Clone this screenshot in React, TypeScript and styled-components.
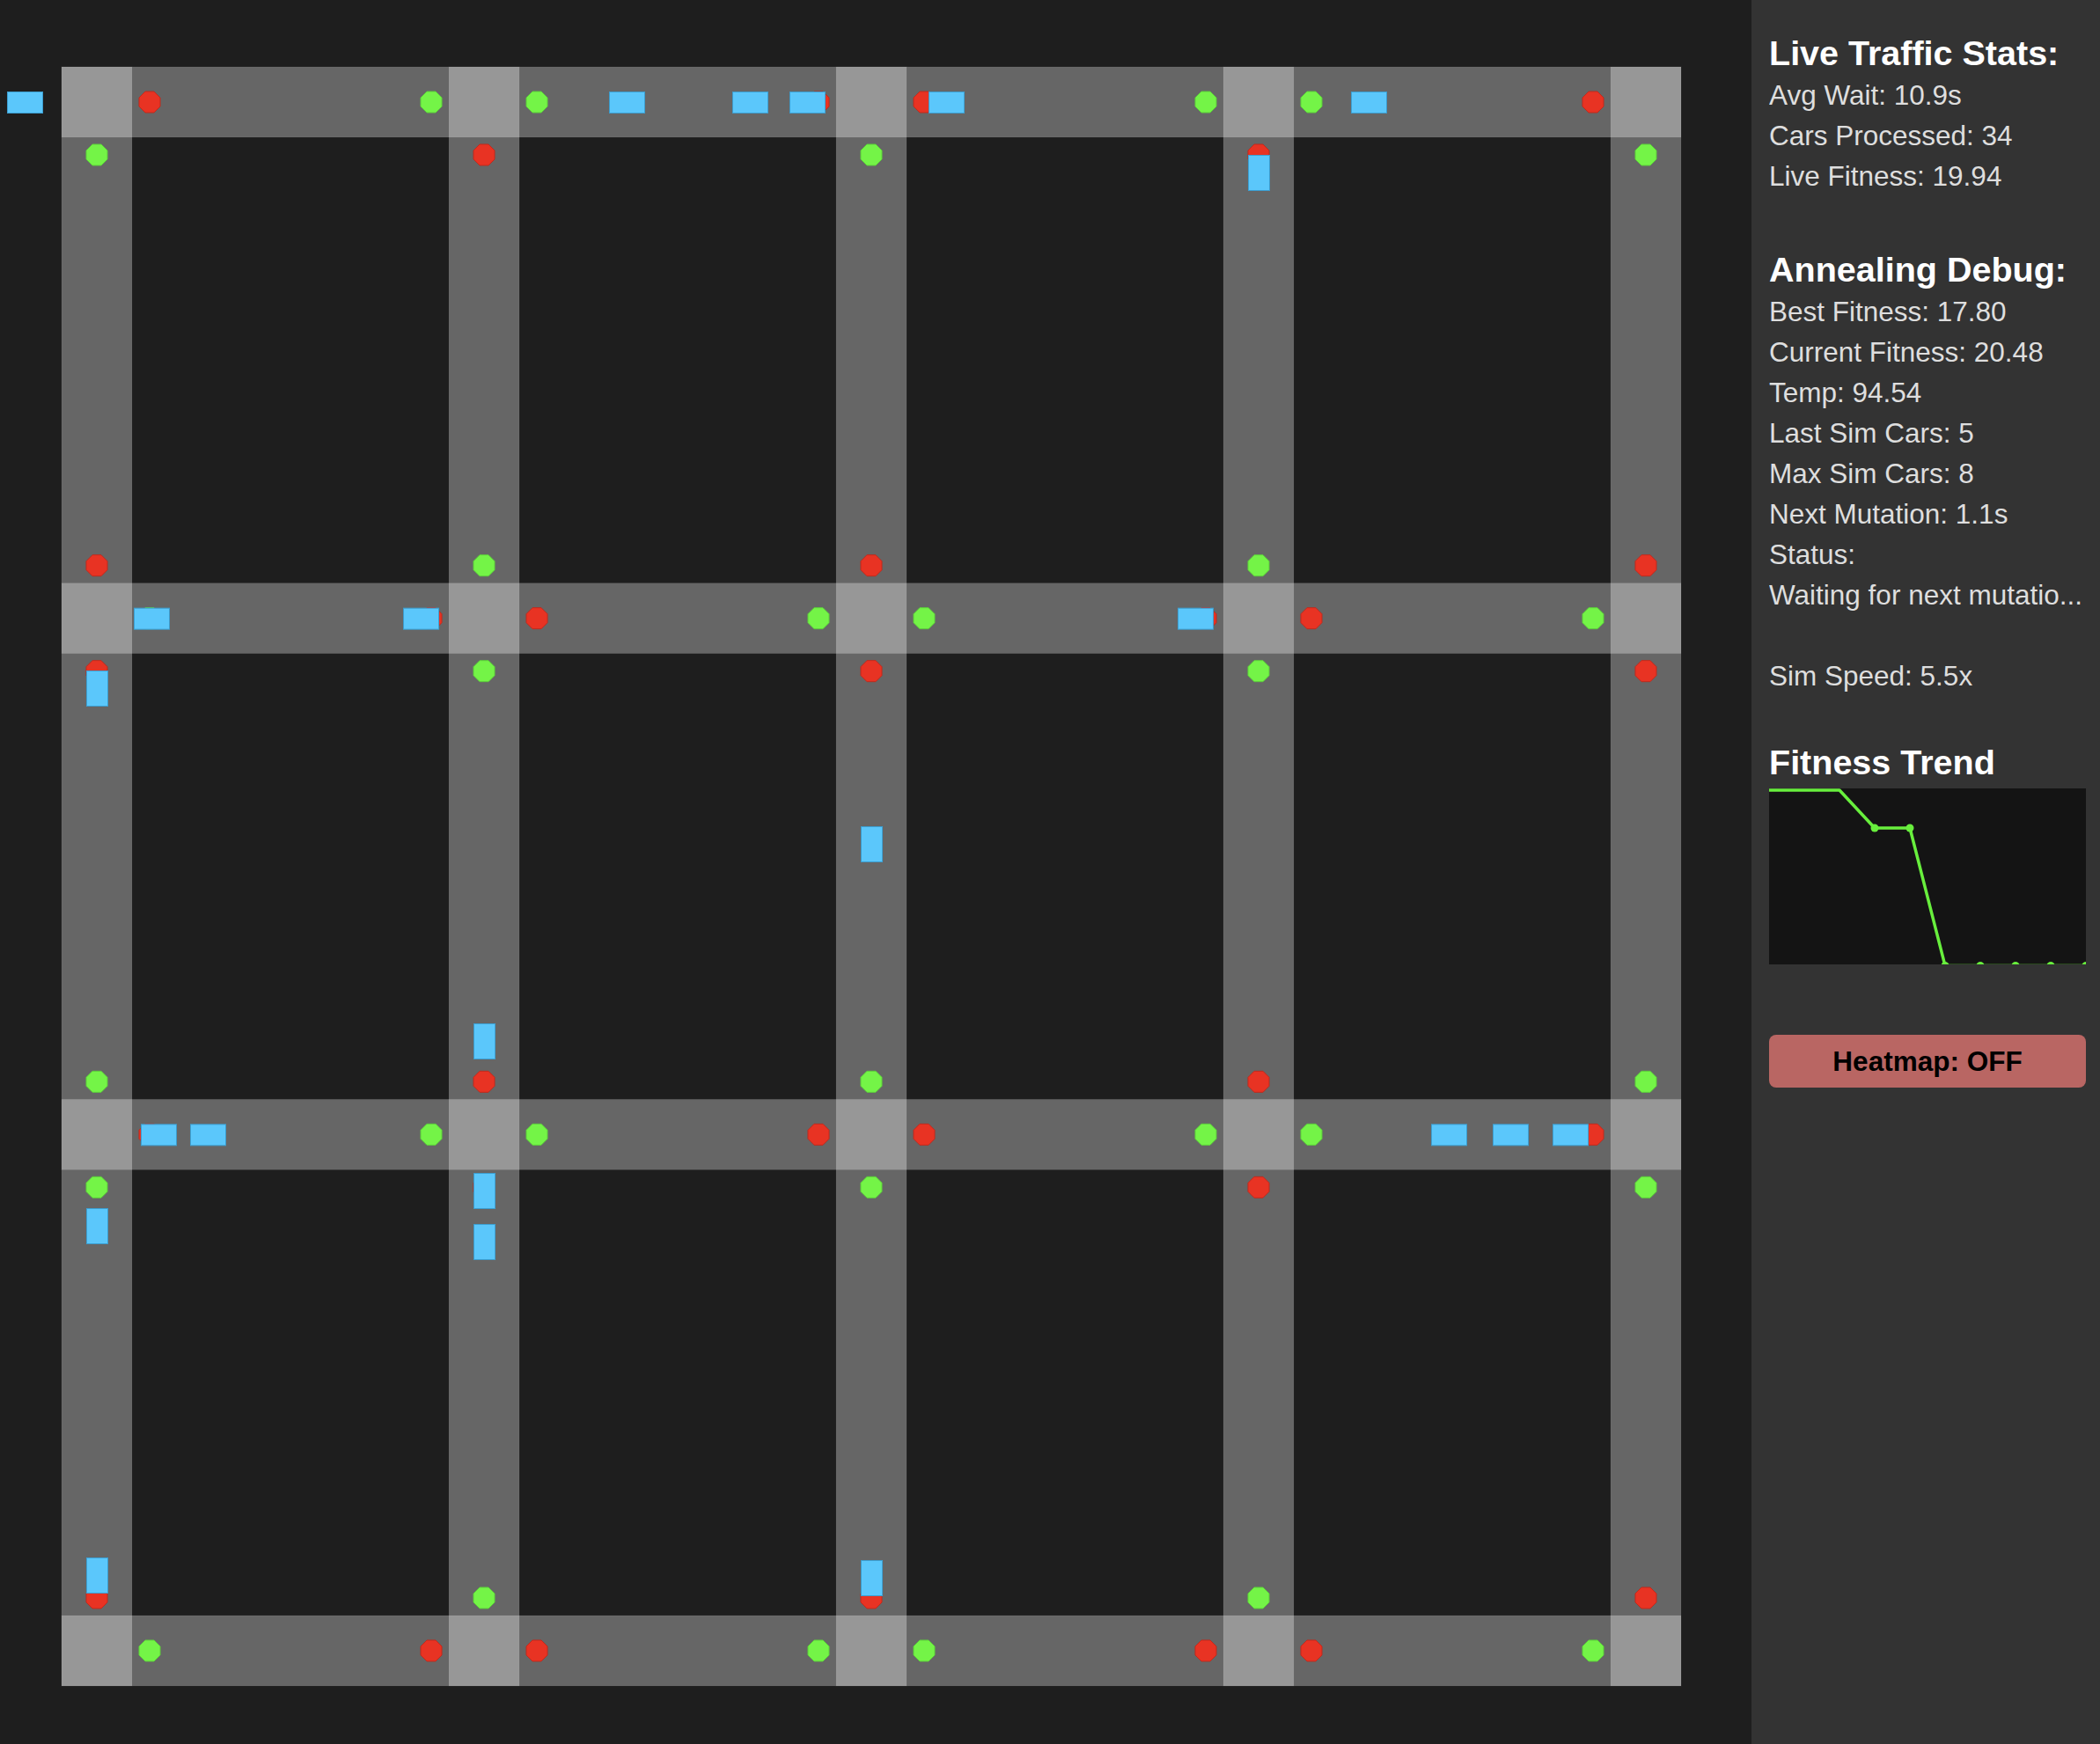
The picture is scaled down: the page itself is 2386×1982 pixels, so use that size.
import React from "react";
import styled, { createGlobalStyle } from "styled-components";

const GlobalStyle = createGlobalStyle`
  html, body {
    margin: 0;
    padding: 0;
    background: #1e1e1e;
    overflow: hidden;
  }
  * { box-sizing: border-box; }
`;

const Layout = styled.div`
  display: flex;
  width: 2386px;
  height: 1982px;
  font-family: "Liberation Sans", Arial, sans-serif;
`;

const CanvasArea = styled.div`
  flex: 1;
  background: #1e1e1e;
  overflow: hidden;
`;

const MapSvg = styled.svg`
  display: block;
`;

const Sidebar = styled.aside`
  width: 396px;
  flex: none;
  background: #333333;
  padding: 35px 16px 0 20px;
  color: #dedede;
  display: flex;
  flex-direction: column;
`;

const SectionTitle = styled.h3<{ $gapTop?: number }>`
  margin: ${(p) => p.$gapTop ?? 0}px 0 0 0;
  font-size: 39.5px;
  line-height: 50px;
  font-weight: 700;
  color: #ffffff;
  white-space: nowrap;
`;

const StatLine = styled.div`
  font-size: 31.5px;
  line-height: 46px;
  min-height: 46px;
  white-space: nowrap;
  overflow: hidden;
`;

const ChartBox = styled.div`
  margin-top: 5px;
  width: 360px;
  height: 200px;
  background: #141414;
`;

const HeatmapButton = styled.button`
  margin-top: 80px;
  width: 360px;
  height: 60px;
  border: none;
  border-radius: 8px;
  background: #b96663;
  color: #000;
  font-family: "Liberation Sans", Arial, sans-serif;
  font-weight: 700;
  font-size: 31.5px;
  padding: 0;
  cursor: pointer;
`;

const CX = [110, 550, 990, 1430, 1870];
const CY = [116, 702.67, 1289.33, 1876];
const ROAD = "rgba(255,255,255,0.32)";
const RED = "#e83323";
const RED_EDGE = "#c02a1d";
const GREEN = "#74f447";
const GREEN_EDGE = "#5cd03a";

function octagon(cx: number, cy: number, r = 13): string {
  const pts: string[] = [];
  for (let k = 0; k < 8; k++) {
    const a = ((22.5 + 45 * k) * Math.PI) / 180;
    pts.push(`${(cx + r * Math.cos(a)).toFixed(2)},${(cy + r * Math.sin(a)).toFixed(2)}`);
  }
  return pts.join(" ");
}

type Light = { x: number; y: number; red: boolean };

const lights: Light[] = [];
CY.forEach((cy, r) => {
  CX.forEach((cx, c) => {
    const hRed = (r + c) % 2 === 0;
    if (c > 0) lights.push({ x: cx - 60, y: cy, red: hRed });
    if (c < CX.length - 1) lights.push({ x: cx + 60, y: cy, red: hRed });
    if (r > 0) lights.push({ x: cx, y: cy - 60, red: !hRed });
    if (r < CY.length - 1) lights.push({ x: cx, y: cy + 60, red: !hRed });
  });
});

// horizontal cars: [x, row]
const hCars: [number, number][] = [
  [8, 0], [692, 0], [832, 0], [897, 0], [1055, 0], [1535, 0],
  [152, 1], [458, 1], [1338, 1],
  [160, 2], [216, 2], [1626, 2], [1696, 2], [1764, 2],
];
// vertical cars: [col, y]
const vCars: [number, number][] = [
  [0, 762], [0, 1373], [0, 1770],
  [1, 1163], [1, 1333], [1, 1391],
  [2, 939], [2, 1773],
  [3, 176],
];

const CAR_FILL = "#5bc7fb";
const CAR_EDGE = "#3c9ed0";

function TrafficMap() {
  return (
    <MapSvg width={1990} height={1982} viewBox="0 0 1990 1982">
      {CY.map((cy, i) => (
        <rect key={`h${i}`} x={70} y={cy - 40} width={1840} height={80} fill={ROAD} stroke="rgba(255,255,255,0.05)" strokeWidth={1} />
      ))}
      {CX.map((cx, i) => (
        <rect key={`v${i}`} x={cx - 40} y={76} width={80} height={1840} fill={ROAD} stroke="rgba(255,255,255,0.05)" strokeWidth={1} />
      ))}
      {lights.map((l, i) => (
        <polygon
          key={`l${i}`}
          points={octagon(l.x, l.y)}
          fill={l.red ? RED : GREEN}
          stroke={l.red ? RED_EDGE : GREEN_EDGE}
          strokeWidth={1}
        />
      ))}
      {hCars.map(([x, r], i) => (
        <rect key={`hc${i}`} x={x + 0.5} y={CY[r] - 12 + 0.5} width={40} height={24} fill={CAR_FILL} stroke={CAR_EDGE} strokeWidth={1} />
      ))}
      {vCars.map(([c, y], i) => (
        <rect key={`vc${i}`} x={CX[c] - 12 + 0.5} y={y + 0.5} width={24} height={40} fill={CAR_FILL} stroke={CAR_EDGE} strokeWidth={1} />
      ))}
    </MapSvg>
  );
}

const trend = [2, 2, 2, 45, 45, 201.5, 201.5, 201.5, 201.5, 201.5];

function FitnessChart() {
  const pts = trend.map((v, i) => `${i * 40},${v}`).join(" ");
  return (
    <ChartBox>
      <svg width={360} height={200} viewBox="0 0 360 200" style={{ display: "block" }}>
        <polyline points={pts} fill="none" stroke="#68ef3d" strokeWidth={3.5} strokeLinejoin="round" />
        {trend.map((v, i) =>
          i >= 3 ? <circle key={i} cx={i * 40} cy={v} r={4.5} fill="#68ef3d" /> : null
        )}
      </svg>
    </ChartBox>
  );
}

export default function App() {
  return (
    <>
      <GlobalStyle />
      <Layout>
        <CanvasArea>
          <TrafficMap />
        </CanvasArea>
        <Sidebar>
          <SectionTitle>Live Traffic Stats:</SectionTitle>
          <StatLine>Avg Wait: 10.9s</StatLine>
          <StatLine>Cars Processed: 34</StatLine>
          <StatLine>Live Fitness: 19.94</StatLine>
          <SectionTitle $gapTop={58}>Annealing Debug:</SectionTitle>
          <StatLine>Best Fitness: 17.80</StatLine>
          <StatLine>Current Fitness: 20.48</StatLine>
          <StatLine>Temp: 94.54</StatLine>
          <StatLine>Last Sim Cars: 5</StatLine>
          <StatLine>Max Sim Cars: 8</StatLine>
          <StatLine>Next Mutation: 1.1s</StatLine>
          <StatLine>Status:</StatLine>
          <StatLine>Waiting for next mutatio...</StatLine>
          <StatLine />
          <StatLine>Sim Speed: 5.5x</StatLine>
          <SectionTitle $gapTop={50}>Fitness Trend</SectionTitle>
          <FitnessChart />
          <HeatmapButton>Heatmap: OFF</HeatmapButton>
        </Sidebar>
      </Layout>
    </>
  );
}
